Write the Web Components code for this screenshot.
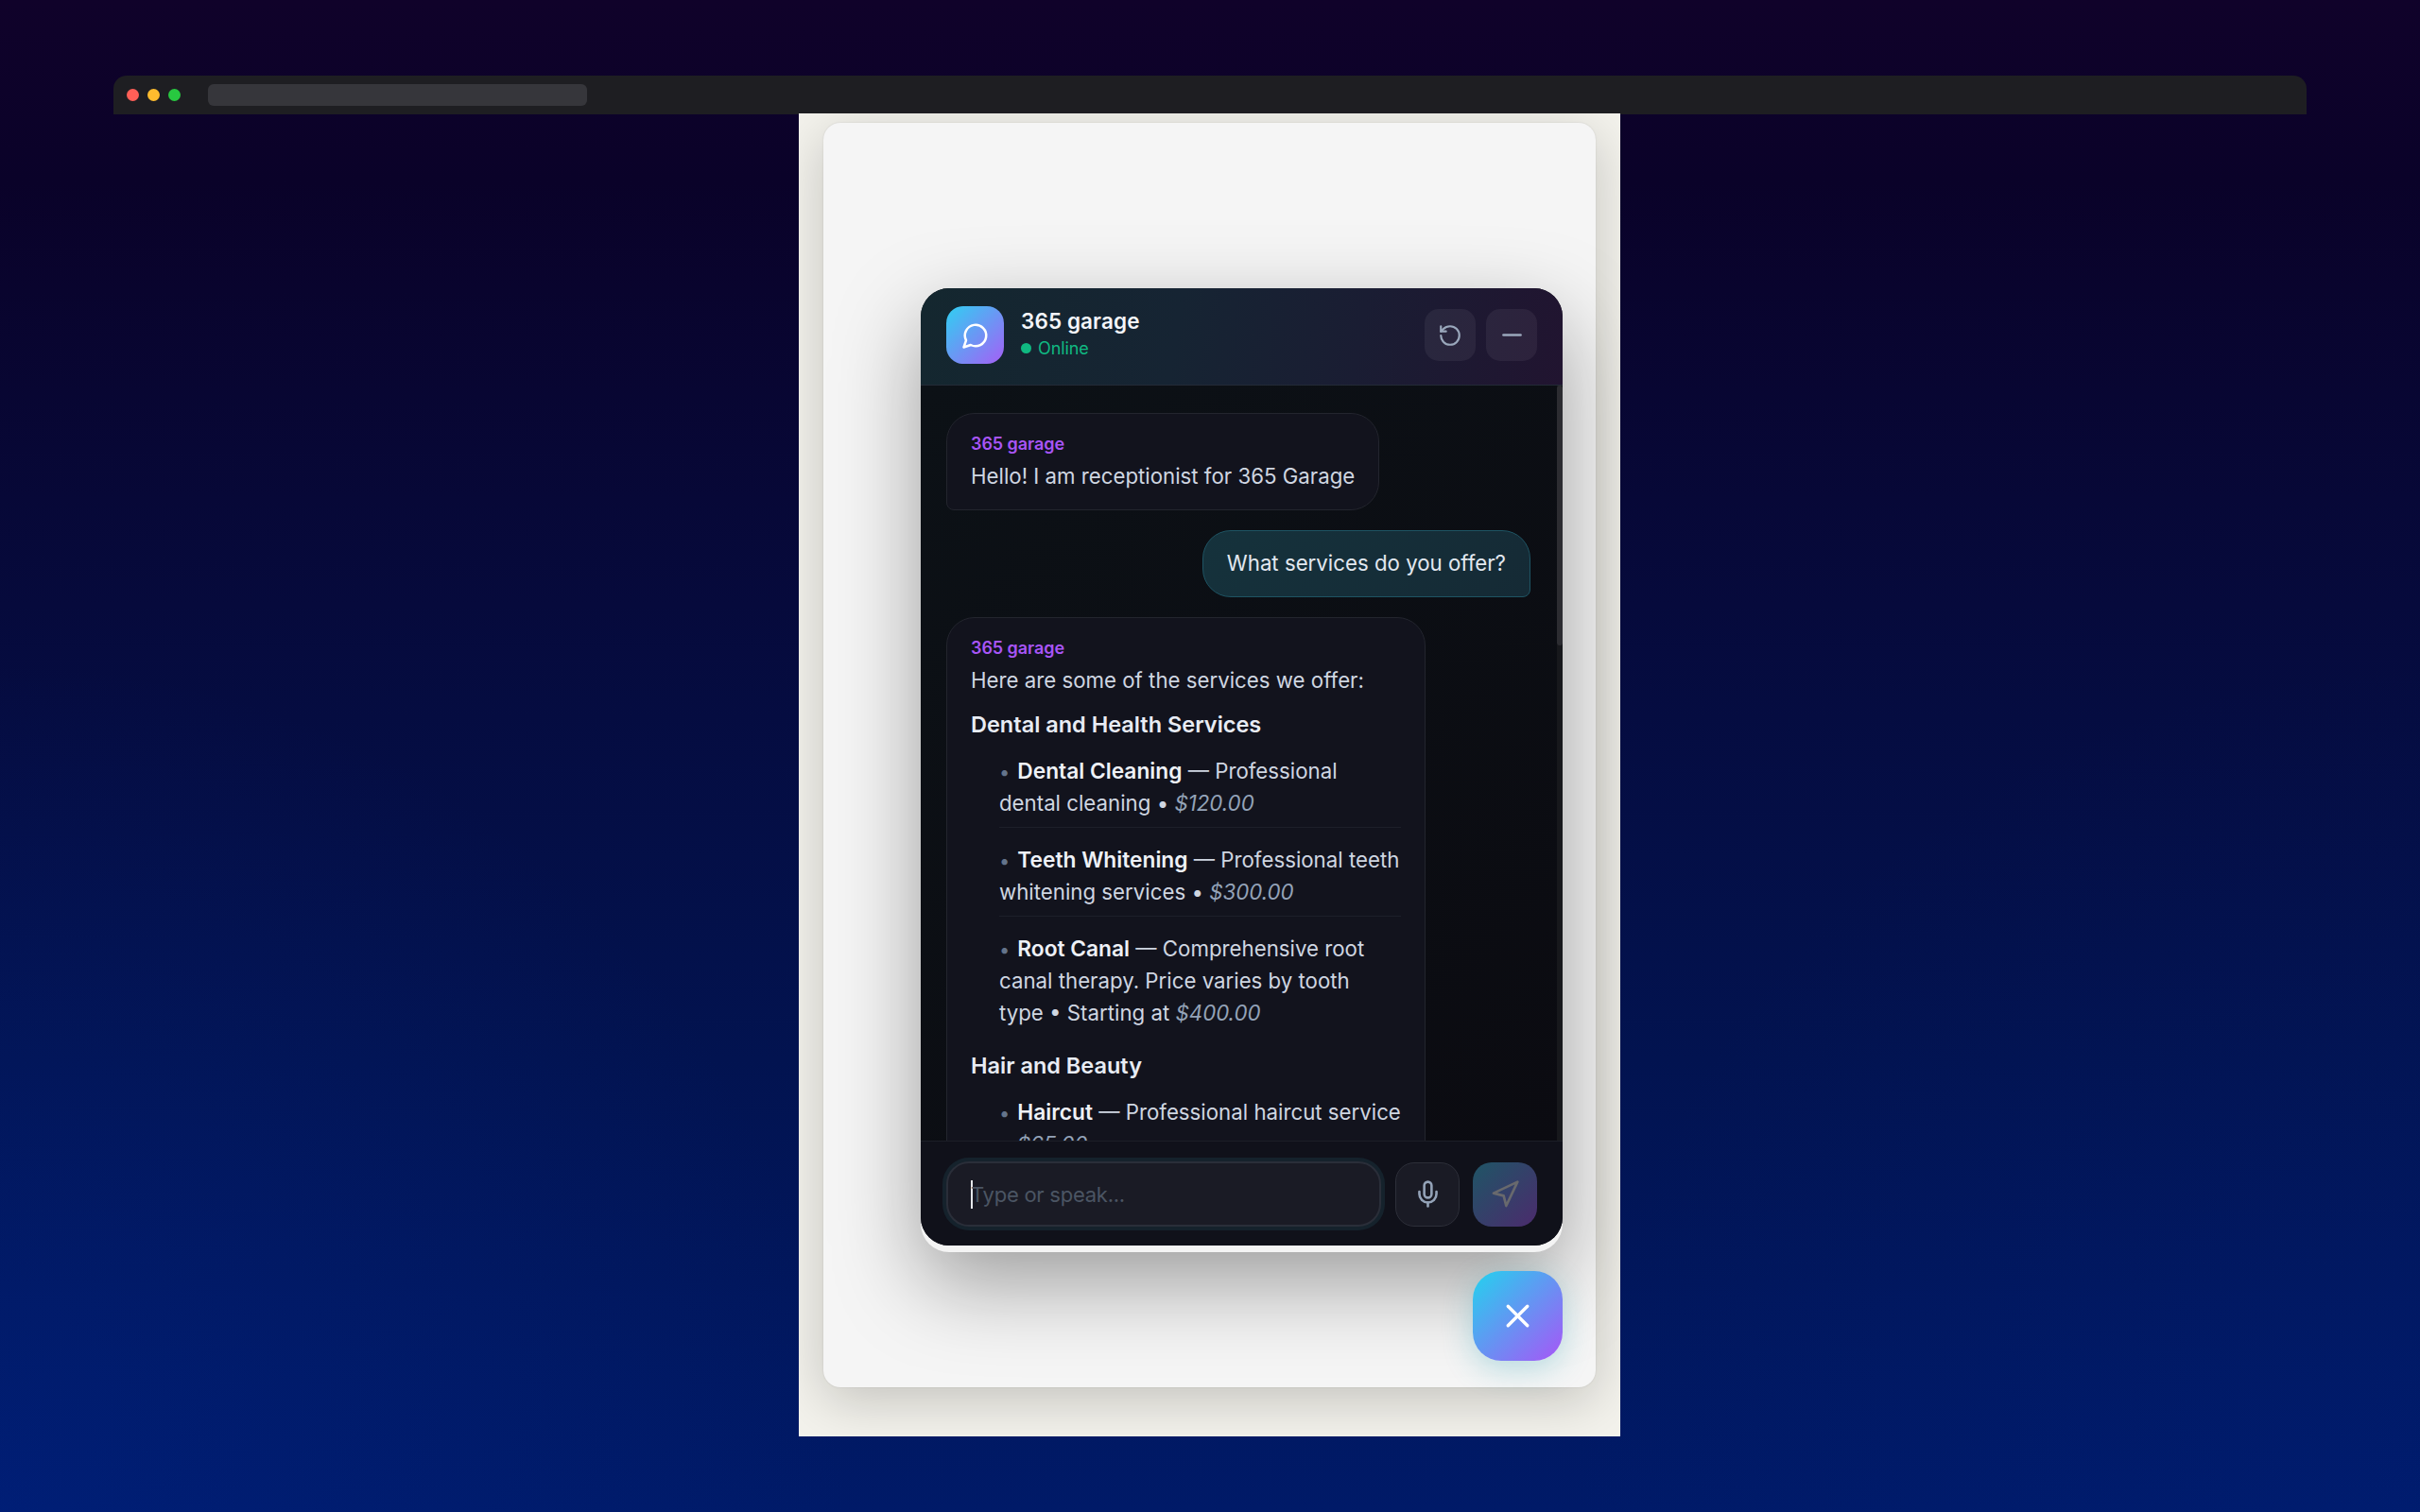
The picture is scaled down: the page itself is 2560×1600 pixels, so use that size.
<!DOCTYPE html>
<html>
<head>
<meta charset="utf-8">
<title>365 garage</title>
<style>
    html, body { margin: 0; height: 1600px; overflow: hidden; }
    body {
        background:
            radial-gradient(ellipse 900px 900px at 0% 100%, rgba(0, 40, 150, 0.3), transparent 100%),
            radial-gradient(ellipse 900px 900px at 100% 100%, rgba(0, 40, 150, 0.16), transparent 100%),
            linear-gradient(180deg, #10022a 0%, #0a0229 12%, #060a3c 40%, #021350 70%, #001a68 100%);
        font-family: "Inter", "Lato", sans-serif;
        padding: 80px 120px 0;
        box-sizing: border-box;
    }
</style>
</head>
<body>
<browser-bar></browser-bar>
<demo-page>
    <chat-panel>
        <chat-header slot="header" title="365 garage" status="Online"></chat-header>
        <chat-bubble from="365 garage">Hello! I am receptionist for 365 Garage</chat-bubble>
        <chat-bubble user>What services do you offer?</chat-bubble>
        <chat-bubble from="365 garage">
            <service-list intro="Here are some of the services we offer:">
                <service-group name="Dental and Health Services">
                    <service-item name="Dental Cleaning" price="$120.00">— Professional<br>dental cleaning •</service-item>
                    <service-item name="Teeth Whitening" price="$300.00">— Professional teeth<br>whitening services •</service-item>
                    <service-item name="Root Canal" price="$400.00">— Comprehensive root<br>canal therapy. Price varies by tooth<br>type • Starting at</service-item>
                </service-group>
                <service-group name="Hair and Beauty">
                    <service-item name="Haircut" price="$65.00">— Professional haircut service<br>•</service-item>
                </service-group>
            </service-list>
        </chat-bubble>
        <chat-composer slot="footer" placeholder="Type or speak..."></chat-composer>
    </chat-panel>
    <chat-fab></chat-fab>
</demo-page>

<script>
'use strict';

const svg = (size, body, width = 2) => `<svg width="${size}" height="${size}" viewBox="0 0 24 24" fill="none" stroke="currentColor" stroke-width="${width}" stroke-linecap="round" stroke-linejoin="round">${body}</svg>`;

class BrowserBar extends HTMLElement {
    constructor() {
        super();
        this.attachShadow({ mode: 'open' }).innerHTML = `
            <style>
                :host { display: flex; align-items: center; height: 41px; background: #1e1e22; border-radius: 14px 14px 0 0; padding-left: 14px; }
                .dot { width: 13px; height: 13px; border-radius: 50%; margin-right: 9px; }
                .url { width: 401px; height: 23px; margin-left: 20px; border-radius: 6px; background: #36363b; }
            </style>
            <div class="dot" style="background:#ff5f57"></div>
            <div class="dot" style="background:#febc2e"></div>
            <div class="dot" style="background:#28c840"></div>
            <div class="url"></div>`;
    }
}

class DemoPage extends HTMLElement {
    constructor() {
        super();
        this.attachShadow({ mode: 'open' }).innerHTML = `
            <style>
                :host { display: block; width: 869px; height: 1400px; margin: -1px auto 0; background: #f3f2ec; overflow: hidden; padding: 10px 26px 0; box-sizing: border-box; position: relative; left: -0.5px; }
                .card {
                    height: 1338px; border-radius: 18px; background: #f5f5f5; box-sizing: border-box;
                    box-shadow: 0 14px 55px rgba(0, 0, 0, 0.2), 0 0 2px rgba(0, 0, 0, 0.12);
                    display: flex; flex-direction: column; align-items: flex-end; justify-content: flex-end;
                    padding: 0 35px 28px; gap: 20px;
                }
            </style>
            <div class="card"><slot></slot></div>`;
    }
}

class ChatPanel extends HTMLElement {
    constructor() {
        super();
        this.attachShadow({ mode: 'open' }).innerHTML = `
            <style>
                :host { display: block; width: 679px; height: 1020px; background: #f4f4f4; border-radius: 30px; box-shadow: 0 33px 90px rgba(0, 0, 0, 0.36); }
                .inner { height: 1013px; border-radius: 30px; overflow: hidden; display: flex; flex-direction: column; background: #0b0d12; }
                .body { flex: 1; min-height: 0; display: flex; background: linear-gradient(135deg, #0c1116 0%, #0b0b11 100%); }
                .messages { flex: 1; min-width: 0; overflow: hidden; display: flex; flex-direction: column; gap: 21px; padding: 29px 28px 0 27px; }
                .track { width: 6px; background: #17181c; }
                .thumb { height: 275px; background: #2c2c31; border-radius: 3px; }
            </style>
            <div class="inner">
                <slot name="header"></slot>
                <div class="body">
                    <div class="messages"><slot></slot></div>
                    <div class="track"><div class="thumb"></div></div>
                </div>
                <slot name="footer"></slot>
            </div>`;
    }
}

class ChatHeader extends HTMLElement {
    constructor() {
        super();
        this.attachShadow({ mode: 'open' }).innerHTML = `
            <style>
                :host { display: flex; align-items: center; height: 103px; flex: none; box-sizing: border-box; padding: 0 27px 3px 27px; background: linear-gradient(100deg, #14272f 0%, #162433 40%, #1a1d33 68%, #211430 100%); border-bottom: 1px solid #232a36; }
                .avatar { width: 61px; height: 61px; border-radius: 18px; background: linear-gradient(135deg, #2fd0f2 0%, #a55ff6 100%); color: #fff; display: flex; align-items: center; justify-content: center; margin-right: 18px; }
                .info { flex: 1; margin-top: -5px; }
                .title { color: #f4f6fa; font-size: 22.5px; font-weight: 600; line-height: 32px; letter-spacing: 0.1px; }
                .status { color: #10b981; font-size: 18px; letter-spacing: -0.1px; line-height: 24px; display: flex; align-items: center; gap: 7px; margin-top: 1px; }
                .status i { width: 11px; height: 11px; border-radius: 50%; background: #10b981; }
                button { width: 54px; height: 55px; border: 0; border-radius: 15px; background: rgba(255, 255, 255, 0.06); color: #9aa8bc; display: flex; align-items: center; justify-content: center; padding: 0; margin-left: 11px; }
            </style>
            <div class="avatar">${svg(30, '<path d="M7.9 20A9 9 0 1 0 4 16.1L2 22Z"/>', 2)}</div>
            <div class="info">
                <div class="title">${this.getAttribute('title')}</div>
                <div class="status"><i></i>${this.getAttribute('status')}</div>
            </div>
            <button>${svg(26, '<path d="M3 12a9 9 0 1 0 9-9 9.75 9.75 0 0 0-6.74 2.74L3 8"/><path d="M3 3v5h5"/>')}</button>
            <button>${svg(31, '<path d="M5 12h14"/>')}</button>`;
    }
}

class ChatBubble extends HTMLElement {
    constructor() {
        super();
        let from = this.getAttribute('from');
        this.attachShadow({ mode: 'open' }).innerHTML = `
            <style>
                :host { display: block; flex: none; align-self: flex-start; box-sizing: border-box; padding: 21px 25px 18px; background: #12131d; border: 1px solid #23252e; border-radius: 30px 30px 30px 8px; color: #cfd6e1; font-size: 22.25px; line-height: 34px; font-weight: 400; }
                :host([user]) { align-self: flex-end; padding: 17px 25px 18px; background: linear-gradient(135deg, #15323c, #152a35); border-color: #1e5463; border-radius: 30px 30px 8px 30px; color: #e2e8f0; }
                .from { color: #a855f7; font-size: 18px; font-weight: 600; letter-spacing: -0.05px; line-height: 22px; margin-bottom: 6px; }
            </style>
            ${from ? `<div class="from">${from}</div>` : ''}
            <slot></slot>`;
    }
}

class ServiceList extends HTMLElement {
    constructor() {
        super();
        this.attachShadow({ mode: 'open' }).innerHTML = `
            <style>
                :host { display: block; width: 455px; }
            </style>
            <div>${this.getAttribute('intro')}</div>
            <slot></slot>`;
    }
}

class ServiceGroup extends HTMLElement {
    constructor() {
        super();
        this.attachShadow({ mode: 'open' }).innerHTML = `
            <style>
                :host { display: block; margin-top: 13px; }
                :host(:not(:first-child)) { margin-top: 22px; }
                .name { color: #e8ecf4; font-size: 23.5px; font-weight: 600; margin-bottom: 15px; }
                .list { padding-left: 30px; }
                ::slotted(service-item:last-child) { border-bottom: 0; padding-bottom: 0; margin-bottom: 0; }
            </style>
            <div class="name">${this.getAttribute('name')}</div>
            <div class="list"><slot></slot></div>`;
    }
}

class ServiceItem extends HTMLElement {
    constructor() {
        super();
        this.attachShadow({ mode: 'open' }).innerHTML = `
            <style>
                :host { display: block; padding-bottom: 8px; margin-bottom: 17px; border-bottom: 1px solid #1d1f29; }
                .bullet { color: #64748b; margin-right: 8px; font-size: 20px; line-height: 0; }
                strong { color: #eef1f7; font-weight: 600; font-size: 22.75px; line-height: 0; }
                em { color: #94a3b8; }
            </style>
            <span class="bullet">•</span><strong>${this.getAttribute('name')}</strong> <slot></slot> <em>${this.getAttribute('price')}</em>`;
    }
}

class ChatComposer extends HTMLElement {
    constructor() {
        super();
        this.attachShadow({ mode: 'open' }).innerHTML = `
            <style>
                :host { display: flex; flex: none; align-items: center; height: 111px; box-sizing: border-box; padding: 1px 27px 0 27px; background: #10111a; border-top: 1px solid #1c1e27; gap: 14px; }
                .input { flex: 1; height: 69px; box-sizing: border-box; display: flex; align-items: center; padding-left: 24px; background: #1a1b25; border: 2px solid #2a2e39; border-radius: 24px; box-shadow: 0 0 0 4px #15222c; margin-right: 1px; font-size: 22px; letter-spacing: -0.25px; color: #4b5563; }
                .caret { width: 2px; height: 30px; background: #e5e7eb; margin-right: -2px; }
                button { width: 68px; height: 68px; flex: none; border-radius: 20px; display: flex; align-items: center; justify-content: center; padding: 0; }
                .mic { background: #1a1b25; border: 1px solid #2d2f39; color: #94a3b8; }
                .send { border: 0; background: linear-gradient(135deg, #1f5566 0%, #4b2b6d 100%); color: #68696d; }
            </style>
            <div class="input"><span class="caret"></span>${this.getAttribute('placeholder')}</div>
            <button class="mic">${svg(31, '<path d="M12 2a3 3 0 0 0-3 3v7a3 3 0 0 0 6 0V5a3 3 0 0 0-3-3Z"/><path d="M19 10v2a7 7 0 0 1-14 0v-2"/><path d="M12 19v3"/>')}</button>
            <button class="send">${svg(32, '<polygon points="3 11 22 2 13 21 11 13 3 11"/>')}</button>`;
    }
}

class ChatFab extends HTMLElement {
    constructor() {
        super();
        this.attachShadow({ mode: 'open' }).innerHTML = `
            <style>
                :host { display: flex; flex: none; width: 95px; height: 95px; align-items: center; justify-content: center; border-radius: 30px; color: #fff; background: linear-gradient(135deg, #22d3ee 0%, #a855f7 100%); box-shadow: 0 8px 32px rgba(34, 160, 180, 0.3); }
            </style>
            ${svg(41, '<path d="M18 6 6 18"/><path d="m6 6 12 12"/>')}`;
    }
}

customElements.define('browser-bar', BrowserBar);
customElements.define('demo-page', DemoPage);
customElements.define('chat-panel', ChatPanel);
customElements.define('chat-header', ChatHeader);
customElements.define('chat-bubble', ChatBubble);
customElements.define('service-list', ServiceList);
customElements.define('service-group', ServiceGroup);
customElements.define('service-item', ServiceItem);
customElements.define('chat-composer', ChatComposer);
customElements.define('chat-fab', ChatFab);
</script>
</body>
</html>
